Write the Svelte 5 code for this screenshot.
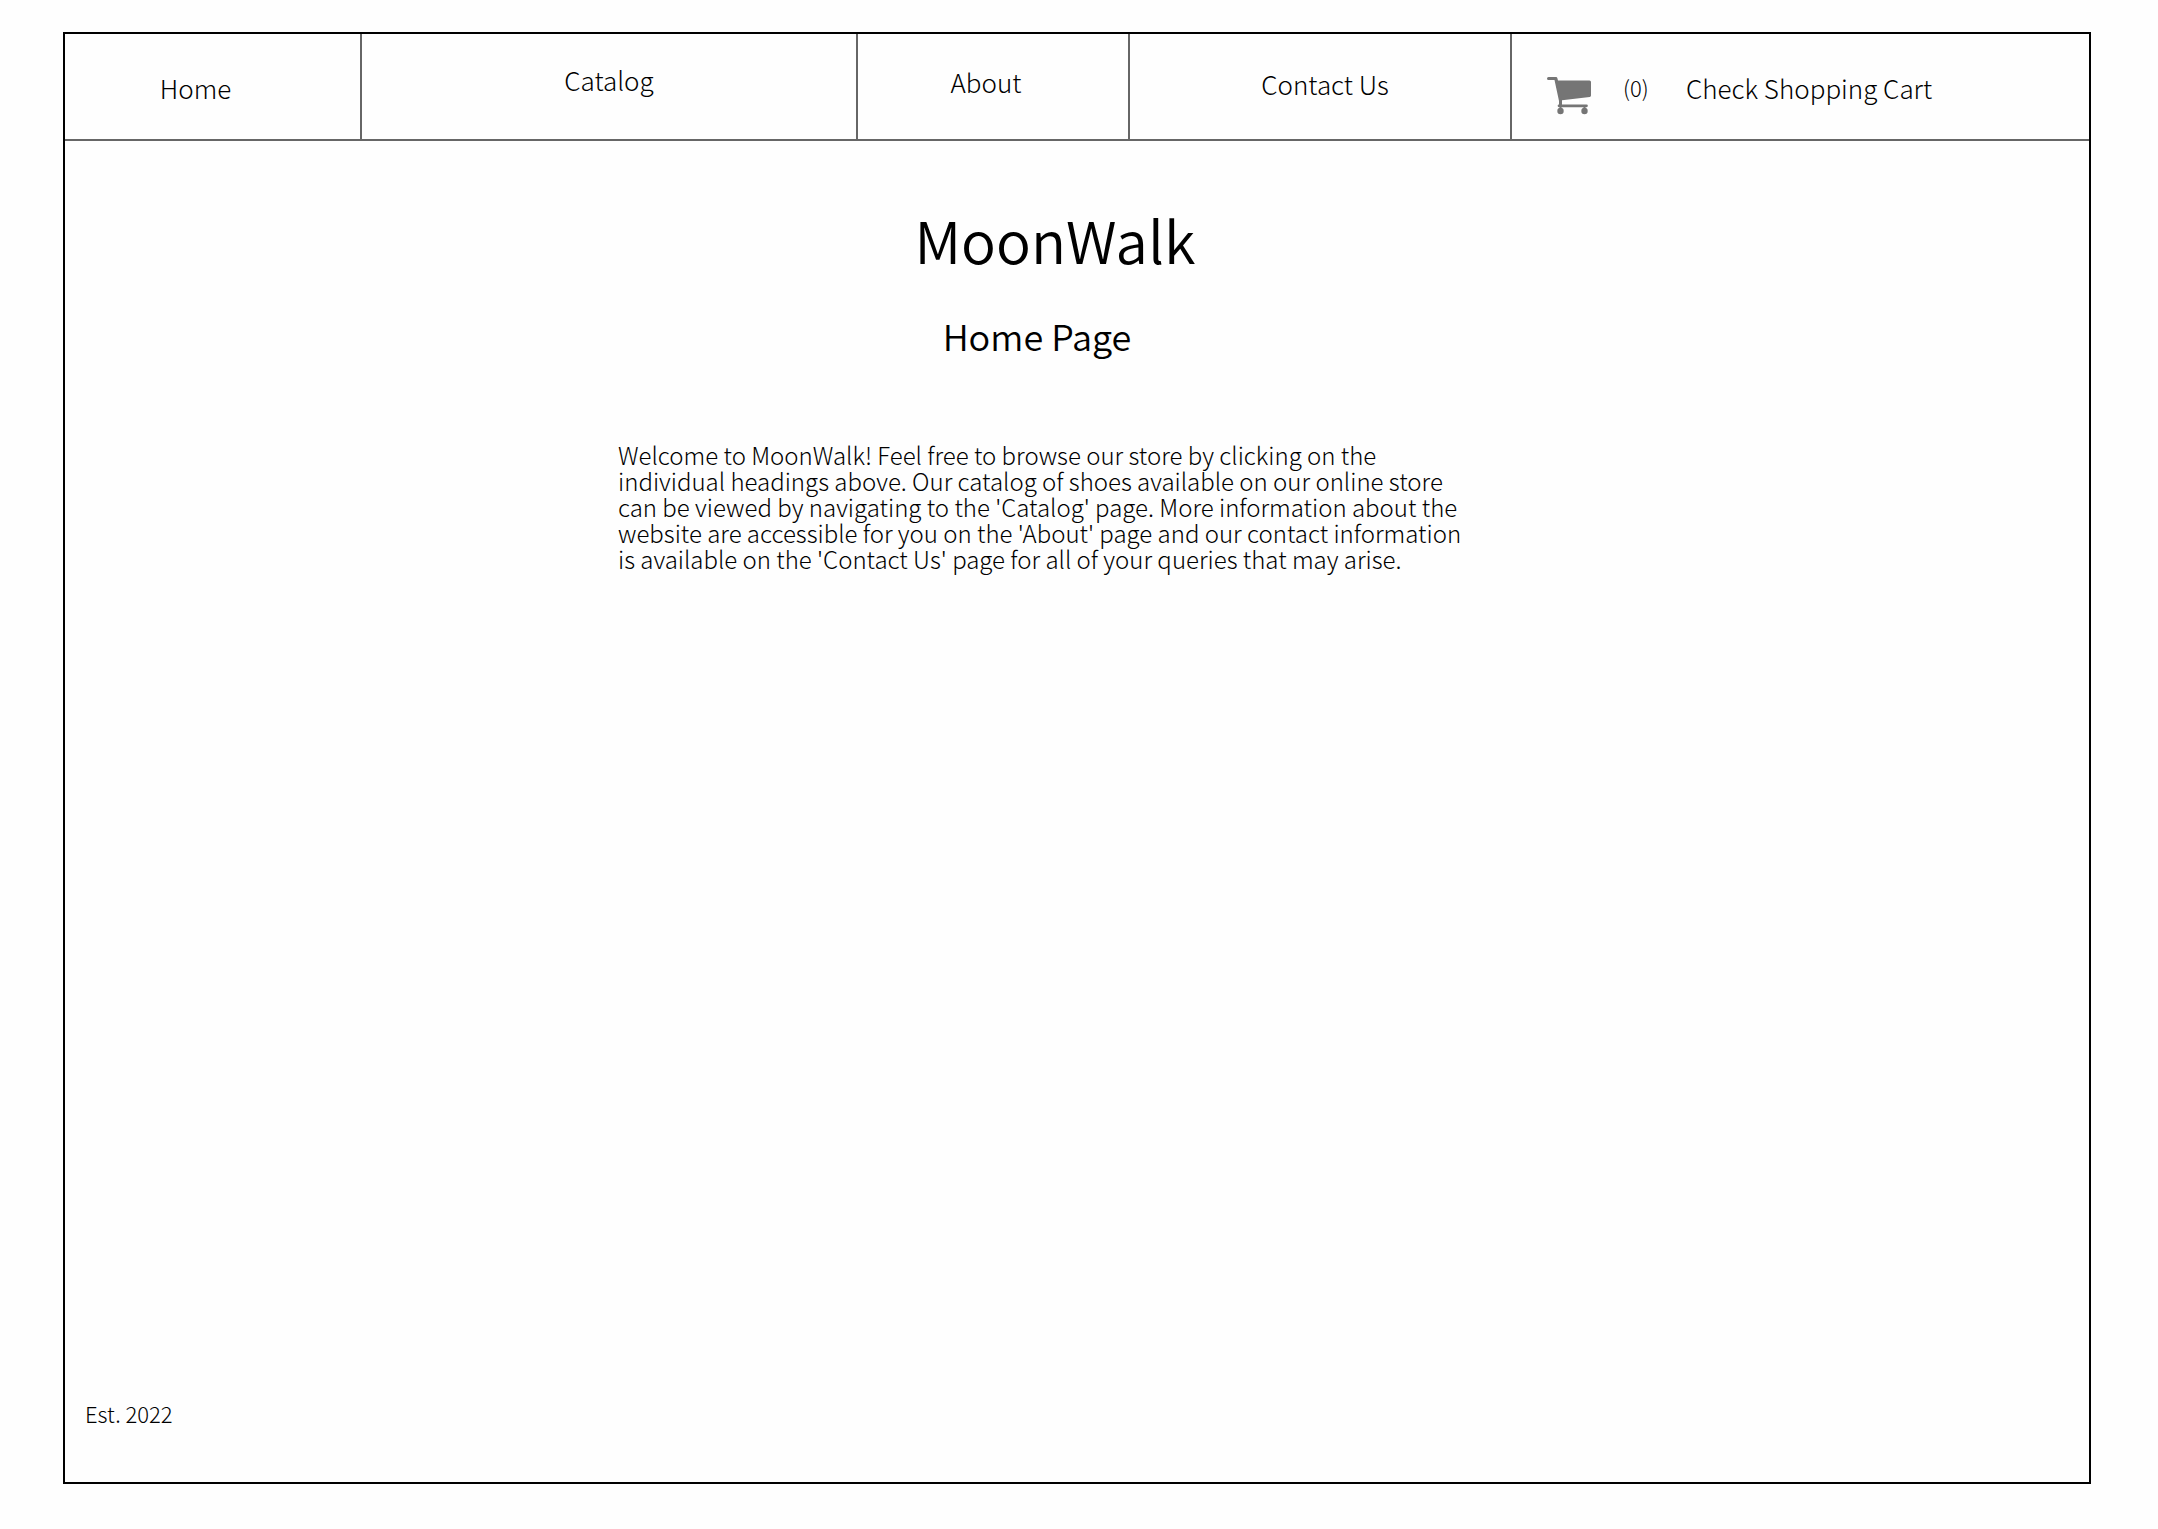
<script>
  const links = [
    { label: 'Home', name: 'home' },
    { label: 'Catalog', name: 'catalog' },
    { label: 'About', name: 'about' },
    { label: 'Contact Us', name: 'contact' }
  ];
  let count = $state(0);
</script>

<div class="page">
  <nav>
    {#each links as link}
      <a class="cell {link.name}" href="#{link.name}">{link.label}</a>
    {/each}
    <a class="cell cart" href="#cart">
      <svg class="icon" viewBox="0 0 44 38" aria-hidden="true">
        <path d="M1.5 0H9a1.5 1.5 0 0 1 1.4 1.2L11 3.5H42.5a1.5 1.5 0 0 1 1.5 1.5V18.5a1.500 1.500 0 0 1-1.300 1.500L15 23.300V27.500H39.500a1.200 1.200 0 0 1 0 2.700H12a1.300 1.300 0 0 1 0-2.700V24L7.500 3H1.500a1.500 1.500 0 0 1 0-3Z" />
        <path d="M12.500 29h2v3h-2zM36.500 29h2v3h-2z" />
        <circle cx="13.500" cy="34" r="3.200" />
        <circle cx="37.500" cy="34" r="3.200" />
      </svg>
      <span class="count">({count})</span>
      <span>Check Shopping Cart</span>
    </a>
  </nav>
  <main>
    <h1>MoonWalk</h1>
    <h2>Home Page</h2>
    <p>
      Welcome to MoonWalk! Feel free to browse our store by clicking on the individual headings
      above. Our catalog of shoes available on our online store can be viewed by navigating to the
      'Catalog' page. More information about the website are accessible for you on the 'About' page
      and our contact information is available on the 'Contact Us' page for all of your queries that
      may arise.
    </p>
  </main>
  <footer>Est. 2022</footer>
</div>

<style>
  :global(body) {
    background: #fefefe;
  }
  .page {
    box-sizing: border-box;
    min-height: calc(100vh - 77px);
    margin: 32px 67px 45px 63px;
    border: 2px solid #000;
    display: flex;
    flex-direction: column;
    font-family: 'Noto Sans CJK SC', 'Noto Sans', sans-serif;
    font-weight: 300;
    color: #000;
  }
  nav {
    display: grid;
    grid-template-columns: 297fr 496fr 272fr 382fr 577fr;
    height: 105px;
    border-bottom: 2px solid #666;
  }
  .cell {
    box-sizing: border-box;
    border-right: 2px solid #666;
    color: inherit;
    text-decoration: none;
    text-align: center;
    font-size: 26px;
    line-height: 32px;
    white-space: nowrap;
  }
  .home {
    padding: 38px 34px 0 0;
  }
  .catalog {
    padding-top: 30px;
  }
  .about {
    padding: 32px 14px 0 0;
  }
  .contact {
    padding: 34px 0 0 10px;
  }
  .cart {
    display: flex;
    align-items: flex-start;
    padding: 38px 0 0 35px;
    border-right: 0;
  }
  .icon {
    width: 44px;
    height: 38px;
    margin: 5px 32px 0 0;
    fill: #757575;
  }
  .count {
    width: 63px;
    font-size: 22px;
    line-height: 30px;
    text-align: left;
  }
  main {
    flex: 1;
    display: flex;
    flex-direction: column;
    align-items: center;
    padding-top: 66px;
  }
  h1,
  h2,
  p {
    margin: 0;
  }
  h1 {
    padding-right: 44px;
    font-size: 58px;
    font-weight: 350;
    line-height: 64px;
  }
  h2 {
    margin-top: 44px;
    padding-right: 80px;
    font-size: 36px;
    font-weight: 350;
    line-height: 40px;
  }
  p {
    width: 860px;
    margin-top: 87px;
    padding-right: 58px;
    font-size: 24px;
    line-height: 26px;
  }
  footer {
    padding: 0 20px 56px;
    font-size: 22px;
    line-height: 26px;
  }
</style>
